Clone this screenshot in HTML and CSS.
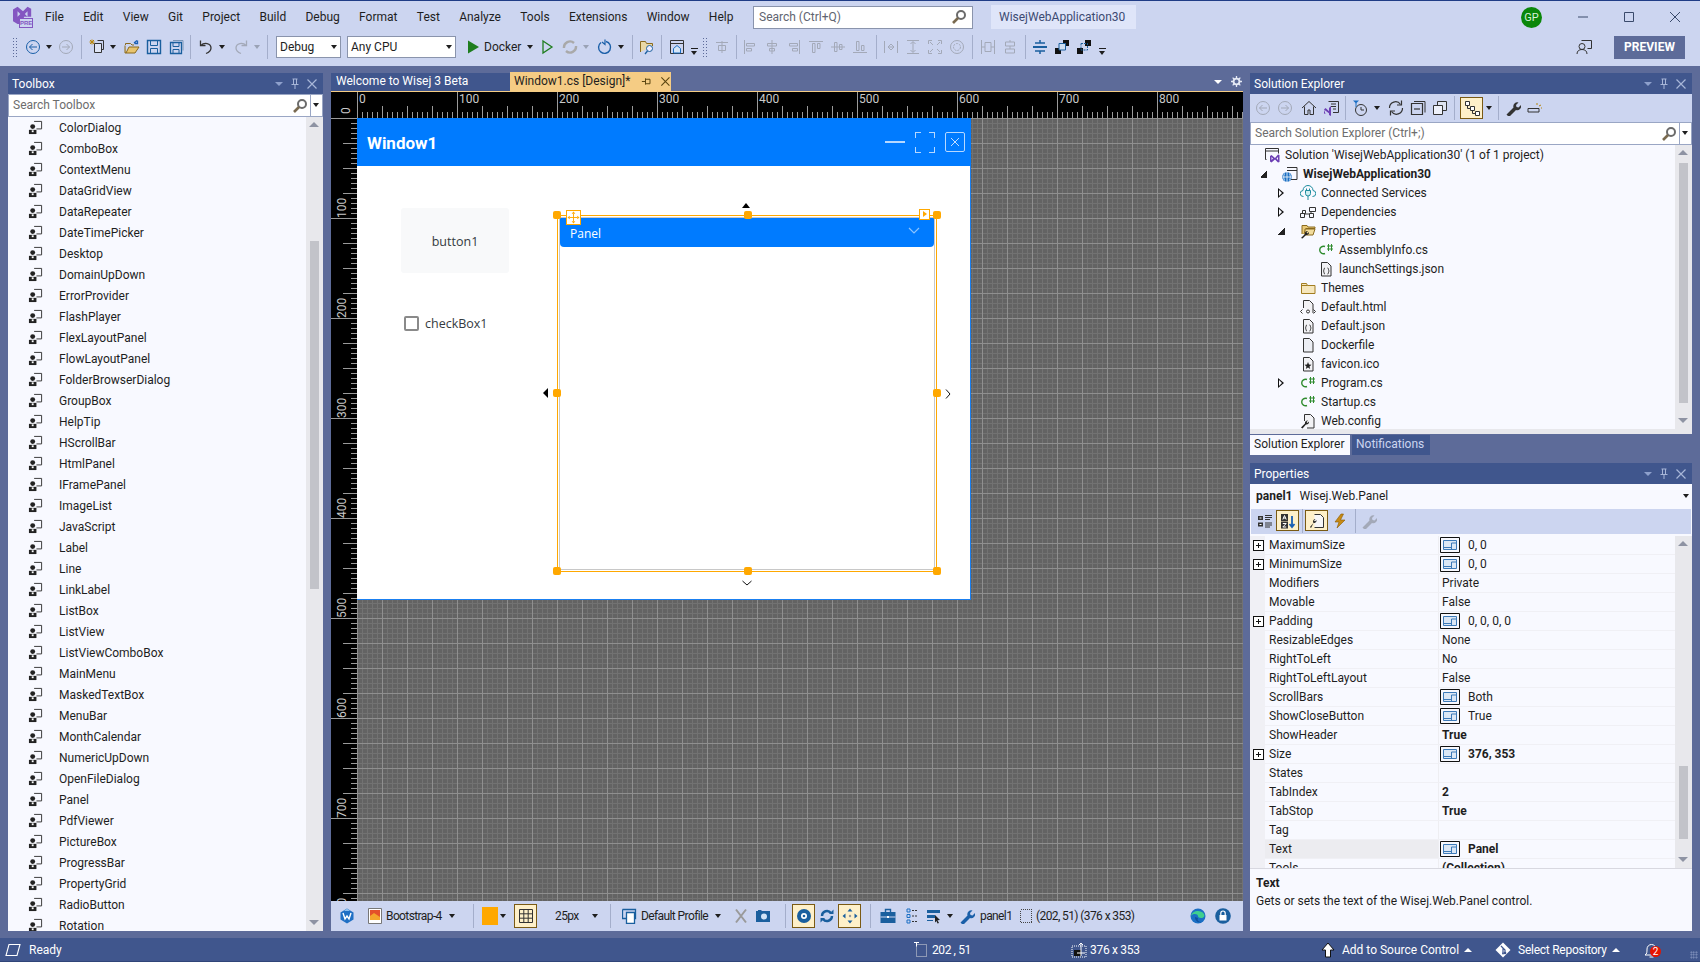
FILE: index.html
```html
<!DOCTYPE html>
<html lang="en">
<head>
<meta charset="UTF-8" />
<title>WisejWebApplication30 - Visual Studio</title>
<link rel="stylesheet" href="styles.css">
</head>
<body>

<svg class="defs" width="0" height="0">
  <symbol id="i-ctl" viewBox="0 0 16 16"><path d="M6.5 1.5h8v8H9" fill="none" stroke="#333"/><circle cx="5" cy="7" r="2.6" fill="#222"/><path d="M1 10.5h8V15H1z" fill="#222"/><path d="M4 11h2v2H4z" fill="#fff"/></symbol>
  <symbol id="i-search" viewBox="0 0 16 16"><circle cx="10" cy="6" r="4" fill="none" stroke="#6b6b6b" stroke-width="2"/><path d="M7 9l-5 5" stroke="#7a6a50" stroke-width="2.6"/></symbol>
  <symbol id="i-back" viewBox="0 0 16 16"><circle cx="8" cy="8" r="6.5" fill="none" stroke="currentColor"/><path d="M12 8H4.5M7.5 5l-3 3 3 3" fill="none" stroke="currentColor"/></symbol>
  <symbol id="i-fwd" viewBox="0 0 16 16"><circle cx="8" cy="8" r="6.5" fill="none" stroke="currentColor"/><path d="M4 8h7.5M8.5 5l3 3-3 3" fill="none" stroke="currentColor"/></symbol>
  <symbol id="i-new" viewBox="0 0 16 16"><path d="M5.5 4.5h7v9h-7z" fill="#dfe5f5" stroke="#333"/><path d="M8.5 1.5h6v9h-2" fill="none" stroke="#333"/><path d="M3 .5v5M.5 3h5M1 1l4 4M5 1L1 5" stroke="#b8860b"/></symbol>
  <symbol id="i-open" viewBox="0 0 16 16"><path d="M1 6.500V14h10l4-6H5l-3 6" fill="#e8c46e" stroke="#8a6a1e"/><path d="M1.500 6V4.500h5L8 6h2" fill="none" stroke="#8a6a1e"/><path d="M10 4l3-2.500M13.500 1.500v3h-3" fill="none" stroke="#1a5fb4" stroke-width="1.300"/></symbol>
  <symbol id="i-save" viewBox="0 0 16 16"><path d="M1.500 1.500h13v13h-13z" fill="none" stroke="#1a5f9e" stroke-width="1.400"/><path d="M4.500 1.500v5h7v-5M4.500 14.500v-5h7v5" fill="none" stroke="#1a5f9e"/></symbol>
  <symbol id="i-saveall" viewBox="0 0 16 16"><path d="M2.500 3.500h11v11h-11z" fill="none" stroke="#1a5f9e" stroke-width="1.300"/><path d="M5 1.500h10v10" fill="none" stroke="#7a97b8"/><path d="M5 3.500v4h6v-4M5 14.500v-4h6v4" fill="none" stroke="#1a5f9e"/></symbol>
  <symbol id="i-undo" viewBox="0 0 16 16"><path d="M2.500 1.500v5h5" fill="none" stroke="currentColor" stroke-width="1.300"/><path d="M3 6.500C6 3 13 4 13 9c0 3-2.500 4.500-5 5.500" fill="none" stroke="currentColor" stroke-width="1.300"/></symbol>
  <symbol id="i-redo" viewBox="0 0 16 16"><path d="M13.500 1.500v5h-5" fill="none" stroke="currentColor" stroke-width="1.300"/><path d="M13 6.500C10 3 3 4 3 9c0 3 2.500 4.500 5 5.500" fill="none" stroke="currentColor" stroke-width="1.300"/></symbol>
  <symbol id="i-play" viewBox="0 0 16 16"><path d="M3 1.500l11 6.500-11 6.500z" fill="#1e7d1e"/></symbol>
  <symbol id="i-playo" viewBox="0 0 16 16"><path d="M4 2l9 6-9 6z" fill="none" stroke="#1e7d1e" stroke-width="1.300"/></symbol>
  <symbol id="i-sync" viewBox="0 0 16 16"><path d="M2 9a6 6 0 0 1 10-5M14 7a6 6 0 0 1-10 5" fill="none" stroke="#a9a9a9" stroke-width="2.400"/></symbol>
  <symbol id="i-refresh" viewBox="0 0 16 16"><path d="M4 3.500a6 6 0 1 0 5-1" fill="none" stroke="currentColor" stroke-width="1.400"/><path d="M8 .5v5l-3-2.500" fill="none" stroke="currentColor" stroke-width="1.200"/></symbol>
  <symbol id="i-findf" viewBox="0 0 16 16"><path d="M1.500 13V2.500h5l1 2h6V7" fill="#e9d8a6" stroke="#8a6a1e"/><circle cx="10.500" cy="9.500" r="3" fill="#eef" stroke="#1a5f9e"/><path d="M8.500 12L6 15" stroke="#1a5f9e" stroke-width="1.300"/></symbol>
  <symbol id="i-homewin" viewBox="0 0 16 16"><path d="M1.500 1.500h13v13h-13zM1.500 4.500h13" fill="none" stroke="#333"/><path d="M4.500 9.500L8 6.500l3.500 3v4.500h-7z" fill="#d6e6f7" stroke="#1a6fc4"/></symbol>
  <symbol id="i-al1" viewBox="0 0 16 16"><path d="M2.500 1v14M4.500 4.500h8v2.500h-8zM4.500 9.500h5v2.500h-5z" fill="none" stroke="currentColor"/></symbol>
  <symbol id="i-al2" viewBox="0 0 16 16"><path d="M8 1v14M3.500 4.500h9v2.500h-9zM5.500 9.500h5v2.500h-5z" fill="none" stroke="currentColor"/></symbol>
  <symbol id="i-al3" viewBox="0 0 16 16"><path d="M13.500 1v14M3.500 4.500h8v2.500h-8zM6.500 9.500h5v2.500h-5z" fill="none" stroke="currentColor"/></symbol>
  <symbol id="i-al4" viewBox="0 0 16 16"><path d="M1 2.500h14M4.500 4.500v9h2.500v-9zM9.500 4.500v5h2.500v-5z" fill="none" stroke="currentColor"/></symbol>
  <symbol id="i-al5" viewBox="0 0 16 16"><path d="M1 8h14M4.500 3.500v9h2.500v-9zM9.500 5.500v5h2.500v-5z" fill="none" stroke="currentColor"/></symbol>
  <symbol id="i-al6" viewBox="0 0 16 16"><path d="M1 13.500h14M4.500 2.500v9h2.500v-9zM9.500 6.500v5h2.500v-5z" fill="none" stroke="currentColor"/></symbol>
  <symbol id="i-al0" viewBox="0 0 16 16"><path d="M8 2v12M2 3.500h12M4.500 6.500h7v5h-7z" fill="none" stroke="currentColor"/></symbol>
  <symbol id="i-sz1" viewBox="0 0 16 16"><path d="M1.500 2v12M14.500 2v12M5 8h6M8 5l3 3-3 3M8 11l-3-3 3-3" fill="none" stroke="currentColor"/></symbol>
  <symbol id="i-sz2" viewBox="0 0 16 16"><path d="M2 1.500h12M2 14.500h12M8 3v10M5.500 5L8 2.500 10.500 5M5.500 11L8 13.500 10.500 11" fill="none" stroke="currentColor"/></symbol>
  <symbol id="i-sz3" viewBox="0 0 16 16"><path d="M1.500 5V1.500H5M11 1.500h3.500V5M14.500 11v3.500H11M5 14.500H1.500V11M3 3l3 3M13 3l-3 3M13 13l-3-3M3 13l3-3" fill="none" stroke="currentColor"/></symbol>
  <symbol id="i-zoom" viewBox="0 0 16 16"><circle cx="8" cy="8" r="6.500" fill="none" stroke="currentColor"/><circle cx="8" cy="8" r="3.500" fill="none" stroke="currentColor" stroke-dasharray="2 1"/></symbol>
  <symbol id="i-sp1" viewBox="0 0 16 16"><path d="M1.500 1v14M14.500 1v14M5 3.500h6v9H5zM1.500 8H5M11 8h3.500" fill="none" stroke="currentColor"/></symbol>
  <symbol id="i-sp2" viewBox="0 0 16 16"><path d="M3.500 3h9v4h-9zM3.500 10h9v4h-9zM8 1v2M8 7v3" fill="none" stroke="currentColor"/></symbol>
  <symbol id="i-eqv" viewBox="0 0 16 16"><path d="M1 8h14" stroke="#1a5f9e" stroke-width="2"/><path d="M3 4h10M3 12h10M8 1v3M8 12v3" stroke="#1a5f9e" stroke-width="1.500"/></symbol>
  <symbol id="i-front" viewBox="0 0 16 16"><path d="M1 9h6v6H1z" fill="#111"/><path d="M9 1h6v6H9z" fill="#111"/><path d="M5 4.500h6.500V11H5z" fill="#cfe0f3" stroke="#1a5f9e"/></symbol>
  <symbol id="i-back2" viewBox="0 0 16 16"><path d="M1 9h6v6H1z" fill="#111"/><path d="M9 1h6v6H9z" fill="#111"/><path d="M5 4.500h6.500V11H5z" fill="none" stroke="#1a5f9e" stroke-dasharray="2 1"/></symbol>
  <symbol id="i-person" viewBox="0 0 16 16"><path d="M5.500 1.500h10v8h-4" fill="none" stroke="#333"/><circle cx="6" cy="7.500" r="3" fill="#ccd5f0" stroke="#333"/><path d="M1 15c0-3 2-4.500 5-4.500s5 1.500 5 4.500" fill="none" stroke="#333"/></symbol>
  <symbol id="i-home" viewBox="0 0 16 16"><path d="M1 8l7-6.500L15 8M3.500 6.500v8h3.500v-4.500h2v4.500h3.500v-8" fill="none" stroke="#333"/></symbol>
  <symbol id="i-vsdoc" viewBox="0 0 16 16"><path d="M5.500 1.500h10v11H10" fill="none" stroke="#333"/><path d="M8 4h5M8 6.500h5M10 9h3" stroke="#333"/><path d="M1 9.500l1.500-1.500L8 13l-.5 1.500zM8 6v10l-2-1V8zM1 9.500v4l1.500.5" fill="#6c3fb4"/></symbol>
  <symbol id="i-clock" viewBox="0 0 16 16"><circle cx="9" cy="10" r="5.500" fill="none" stroke="#333"/><path d="M9 7v3h3" fill="none" stroke="#333"/><path d="M1 .5h6L4 3.500z" fill="#1a6fc4"/><path d="M4 3v4" stroke="#1a6fc4"/></symbol>
  <symbol id="i-sync2" viewBox="0 0 16 16"><path d="M1.500 8a6 6 0 0 1 11-3.500M14.500 8a6 6 0 0 1-11 3.500" fill="none" stroke="#333" stroke-width="1.200"/><path d="M9 5h4.500V.5M7 11H2.500v4.500" fill="none" stroke="#333" stroke-width="1.200"/></symbol>
  <symbol id="i-coll" viewBox="0 0 16 16"><path d="M1.500 3.500h11v11h-11z" fill="none" stroke="#333" stroke-width="1.200"/><path d="M4 1.500h11v11" fill="none" stroke="#333"/><path d="M4 9h6" stroke="#333" stroke-width="1.200"/></symbol>
  <symbol id="i-copies" viewBox="0 0 16 16"><path d="M5.500 1.500h9v9h-9z" fill="#dde3f0" stroke="#333"/><path d="M1.500 5.500h9v9h-9z" fill="#eef1fa" stroke="#333"/></symbol>
  <symbol id="i-tree" viewBox="0 0 16 16"><path d="M1.500 1.500h4v4h-4zM6.500 6.500h4v4h-4zM11.500 11.500h4v4h-4z" fill="#fff" stroke="#333"/><path d="M3.500 5.500V8.500h3M8.500 10.500v3h3" fill="none" stroke="#333"/></symbol>
  <symbol id="i-wrench" viewBox="0 0 16 16"><path d="M1.500 14.500l7-7a4 4 0 0 1 5-5l-2.500 2.500.5 2 2 .5 2.500-2.500a4 4 0 0 1-5 5l-7 7z" fill="currentColor"/></symbol>
  <symbol id="i-prev" viewBox="0 0 16 16"><path d="M1 8.500h11v3.500H1z" fill="none" stroke="#333"/><path d="M12 6l2-1M10 5V3M14 8h1" stroke="#b8860b"/></symbol>
  <symbol id="i-sln" viewBox="0 0 16 16"><path d="M2.500 12.500h-1v-11h13v5" fill="none" stroke="#333"/><path d="M1.500 4h13" stroke="#333"/><path d="M6 9l1.500-1L11 11l3-3.500 1.500.5v7L14 15.500 11 12.500l-3.500 3L6 14.500zM7.500 10v3l1.500-1.500zM14 10l-1.500 1.500L14 13z" fill="#6c3fb4" fill-rule="evenodd"/></symbol>
  <symbol id="i-proj" viewBox="0 0 16 16"><path d="M5 1.500h10v12H9" fill="none" stroke="#333"/><path d="M5 4.500h10" stroke="#333"/><circle cx="5" cy="11" r="4.800" fill="#1a6fc4"/><path d="M.5 11h9M5 6v10M2.500 7.500c-1 2-1 5 0 7M7.500 7.500c1 2 1 5 0 7" fill="none" stroke="#fff" stroke-width=".8"/></symbol>
  <symbol id="i-conn" viewBox="0 0 16 16"><path d="M3.500 11.500A3 3 0 0 1 3 5.500a5 5 0 0 1 10 0 3 3 0 0 1-.5 6" fill="none" stroke="#1c8c9e"/><path d="M5.500 5.500v3a2.500 2.500 0 0 0 5 0v-3zM6.500 3.500v2M9.500 3.500v2M8 11v4" fill="#cdeef2" stroke="#1c8c9e"/></symbol>
  <symbol id="i-dep" viewBox="0 0 16 16"><path d="M2.500 6.500h3v3h-3zM.5 9.500h4v4h-4zM9.500 3.500h6v4h-6zM9.500 9.500h4v4h-4z" fill="none" stroke="#333"/><path d="M5 10h4.500M11 7.500v2" stroke="#333"/></symbol>
  <symbol id="i-propf" viewBox="0 0 16 16"><path d="M2 11V2.500h5l1 1.500h7v1.500H6L4 11" fill="#e9c976" stroke="#8a6a1e"/><path d="M5 6h10l-2 6H5z" fill="#f2dc9c" stroke="#8a6a1e"/><path d="M1 15l4-4a2.500 2.500 0 0 1 3-3L6.500 9.500l1 1L9 9a2.500 2.500 0 0 1-3 3L2.500 15.500z" fill="#222"/></symbol>
  <symbol id="i-cs" viewBox="0 0 16 16"><path d="M7 4.500A3.800 3.800 0 1 0 7 11.500" fill="none" stroke="#2e8b2e" stroke-width="1.400"/><path d="M10.500 2v7M13.500 2v7M9 4h6M9 7h6" stroke="#2e8b2e"/></symbol>
  <symbol id="i-json" viewBox="0 0 16 16"><path d="M3.500 1.500h6l3.500 3.500v10h-9.500z" fill="#f2f2f5" stroke="#333"/><path d="M7 7c-1.500 0-.5 2.500-1.800 3 1.300.5.300 3 1.800 3M9.500 7c1.500 0 .5 2.500 1.800 3-1.300.5-.3 3-1.800 3" fill="none" stroke="#333"/></symbol>
  <symbol id="i-folder" viewBox="0 0 16 16"><path d="M1.500 3.500h5l1 2h7.500v8h-13.500z" fill="#f6e7bd" stroke="#a27d20"/><path d="M1.500 5.500h6" stroke="#a27d20"/></symbol>
  <symbol id="i-html" viewBox="0 0 16 16"><path d="M3.500 9V1.500h6l3.500 3.500v9" fill="#f2f2f5" stroke="#333"/><path d="M2.500 10.500l-2 2 2 2M13.500 10.500l2 2-2 2" fill="none" stroke="#333"/><circle cx="8" cy="12.500" r="1.500" fill="none" stroke="#333"/></symbol>
  <symbol id="i-file" viewBox="0 0 16 16"><path d="M3.500 1.500h6l3.500 3.500v10h-9.500z" fill="#eceef4" stroke="#333"/></symbol>
  <symbol id="i-ico" viewBox="0 0 16 16"><path d="M3.500 1.500h6l3.500 3.500v10h-9.500z" fill="#f2f2f5" stroke="#333"/><path d="M8 6l1 2.500 2.500.2-2 1.700.7 2.600L8 11.500 5.800 13l.7-2.600-2-1.700 2.500-.2z" fill="#222"/></symbol>
  <symbol id="i-config" viewBox="0 0 16 16"><path d="M4.500 8V1.500h6l3.500 3.500v10H7" fill="#f2f2f5" stroke="#333"/><path d="M1 14.500L5 10.500a2.500 2.500 0 0 1 3-3L6.500 9l1 1L9 8.500a2.500 2.500 0 0 1-3 3L2.500 15.500z" fill="#222"/></symbol>
  <symbol id="i-cat" viewBox="0 0 16 16"><path d="M1 3h5v4H1zM1 9.500h5v4H1z" fill="#333"/><path d="M2.500 4.500h2v1h-2zM2.500 11h2v1h-2z" fill="#fff"/><path d="M8 2.500h7M8 4.500h7M8 6.500h5M8 10h7M8 12h7M8 14h5" stroke="#333"/></symbol>
  <symbol id="i-az" viewBox="0 0 16 16"><path d="M1 1h7v7H1zM1 8.500h7v7H1z" fill="#333"/><path d="M2.800 6.500L4.500 2.500l1.700 4M3.300 5h2.400M2.800 10.500h3.400l-3.400 3.500h3.400" fill="none" stroke="#fff"/><path d="M12 3v11M9.500 11l2.500 3 2.500-3" fill="none" stroke="#1a5fb4" stroke-width="1.800"/></symbol>
  <symbol id="i-proppg" viewBox="0 0 16 16"><path d="M5.500 1.500h6l3 3v10h-9" fill="#f6f6f8" stroke="#333"/><path d="M1 14L4.500 10a2.500 2.500 0 0 1 2-4L5 7.500l1 1L7.500 7a2.500 2.500 0 0 1-3 3L2 15z" fill="#222"/></symbol>
  <symbol id="i-bolt" viewBox="0 0 16 16"><path d="M9 1L3 9h4l-2 6 8-8H8.500l3-6z" fill="#c88a14" stroke="#8a5c00" stroke-width=".6"/></symbol>
  <symbol id="i-val" viewBox="0 0 20 16"><path d="M.5.500h19v15H.5z" fill="#f8f9fe" stroke="#111"/><path d="M3.500 3.500h13v9h-13z" fill="#dbe7f5" stroke="#3d7ab8"/><path d="M3.500 10.500h8V12.500M11.500 6v6.500M16 6h-4.500" fill="none" stroke="#3d7ab8"/></symbol>
  <symbol id="i-wlogo" viewBox="0 0 16 16"><path d="M8 .5L14.500 4.500V11.500L8 15.500 1.500 11.500V4.500z" fill="#1f6fc4"/><path d="M4 5l2 6 2-3 2 3 2-6" fill="none" stroke="#fff" stroke-width="1.400"/><path d="M8 .5L11 3H5z" fill="#8ec1f0"/></symbol>
  <symbol id="i-theme" viewBox="0 0 16 16"><path d="M1.500 .5h13v15h-13z" fill="#fff" stroke="#777"/><path d="M3 2h10v10H3z" fill="#e4502a"/><path d="M3 8l4-3 6 4v3H3z" fill="#f4a52c"/></symbol>
  <symbol id="i-grid" viewBox="0 0 16 16"><path d="M1.500 1.500h13v13h-13zM5.800 1.500v13M10.200 1.500v13M1.500 5.800h13M1.500 10.200h13" fill="none" stroke="#333"/></symbol>
  <symbol id="i-profile" viewBox="0 0 16 16"><path d="M.5 1.500h13v9H10" fill="none" stroke="#1a5f9e" stroke-width="1.300"/><path d="M4.500 4.500h8v11h-8z" fill="#fff" stroke="#1a5f9e" stroke-width="1.300"/><path d="M.5 1.500v9H4.500" fill="none" stroke="#1a5f9e" stroke-width="1.300"/></symbol>
  <symbol id="i-x" viewBox="0 0 16 16"><path d="M3 1.500l10 13M13 1.500L3 14.500" stroke="#9a9a9a" stroke-width="2"/></symbol>
  <symbol id="i-cam" viewBox="0 0 16 16"><path d="M1 3h2V2h3l1 1h8v11H1z" fill="#1a5f9e"/><circle cx="9" cy="8.500" r="3" fill="#cfe3f7"/></symbol>
  <symbol id="i-eye" viewBox="0 0 16 16"><circle cx="8" cy="8" r="7" fill="#1a5f9e"/><circle cx="8" cy="8" r="3" fill="#fff"/><circle cx="8" cy="8" r="1.300" fill="#1a5f9e"/></symbol>
  <symbol id="i-loop" viewBox="0 0 16 16"><path d="M3 8a5 5 0 0 1 9-3M13 8a5 5 0 0 1-9 3" fill="none" stroke="#1a5f9e" stroke-width="2.400"/><path d="M10 6h4.500V1.500zM6 10H1.500v4.500z" fill="#1a5f9e"/></symbol>
  <symbol id="i-arrows" viewBox="0 0 16 16"><path d="M8 .5l2.500 3h-5zM8 15.500l-2.500-3h5zM.5 8l3-2.500v5zM15.500 8l-3 2.500v-5z" fill="#1a5f9e"/><circle cx="8" cy="8" r="1.200" fill="#999"/></symbol>
  <symbol id="i-case" viewBox="0 0 16 16"><path d="M5.500 4V1.500h5V4" fill="none" stroke="#1a5f9e" stroke-width="1.400"/><path d="M.5 4h15v11H.5z" fill="#1a5f9e"/><path d="M.5 9h15" stroke="#ccd5f0"/><path d="M7 8h2v2H7z" fill="#fff"/></symbol>
  <symbol id="i-list" viewBox="0 0 16 16"><path d="M3 1h3v3H3zM3 6.500h3v3H3zM3 12h3v3H3z" fill="none" stroke="#1a6fc4"/><path d="M8 2.500h6M8 8h6M8 13.500h6" stroke="#333" stroke-dasharray="2 1"/></symbol>
  <symbol id="i-tabs" viewBox="0 0 16 16"><path d="M1 2h13v3H1zM1 7h8v3H1z" fill="#1a5f9e"/><path d="M1 12h6v1H1z" fill="#1a5f9e"/><path d="M9 7l5 5-2.500.3L13 15l-1.500.5-1-2.500L9 14.500z" fill="#222"/></symbol>
  <symbol id="i-dots" viewBox="0 0 16 16"><path d="M2.500 1.500h11v13h-11z" fill="none" stroke="#444" stroke-dasharray="1 1" shape-rendering="crispEdges"/></symbol>
  <symbol id="i-edge" viewBox="0 0 16 16"><circle cx="8" cy="8" r="7.500" fill="#1a6fc4"/><path d="M1 8c1-5 9-7 13-2 1 2 0 4-3 4-2 0-3-1-3-2 0-2-5-3-7 0z" fill="#3fcf8e"/><path d="M5 9c0 4 3 6 7 5-4 0-5-2-4-4z" fill="#0d4f9e"/></symbol>
  <symbol id="i-lock" viewBox="0 0 16 16"><circle cx="8" cy="8" r="7.800" fill="#1a5f9e"/><path d="M5.800 7V5.200a2.200 2.200 0 0 1 4.400 0V7" fill="none" stroke="#fff" stroke-width="1.200"/><path d="M4.500 7h7v5.500h-7z" fill="#fff"/></symbol>
  <symbol id="i-ready" viewBox="0 0 16 16"><path d="M4 2.500h11l-3 11H1z" fill="none" stroke="#fff" stroke-width="1.100"/></symbol>
  <symbol id="i-pos" viewBox="0 0 16 16"><path d="M3.500 2.500h10v12h-10z" fill="none" stroke="#ddd" stroke-dasharray="1 1"/><path d="M1 .5h5M3.500.5v4" stroke="#fff"/></symbol>
  <symbol id="i-size" viewBox="0 0 16 16"><path d="M1 4h14v11H1z" fill="none" stroke="#fff" stroke-dasharray="1 1"/><path d="M3 8h7v6H3z" fill="#111"/><path d="M10 1v13M6 11h8M8 3l2-2 2 2" fill="none" stroke="#fff"/></symbol>
  <symbol id="i-upload" viewBox="0 0 16 16"><path d="M8 1L14 8H10.500V15H5.500V8H2z" fill="#fff" stroke="#111"/></symbol>
  <symbol id="i-git" viewBox="0 0 16 16"><path d="M8 .5L15.500 8 8 15.500.5 8z" fill="#fff"/><path d="M6 4l4 4v3.500M8 6v5" fill="none" stroke="#40568d" stroke-width="1.200"/><circle cx="10" cy="11" r="1.300" fill="#40568d"/><circle cx="8" cy="11.500" r="1" fill="#40568d"/></symbol>
  <symbol id="i-bell" viewBox="0 0 16 16"><path d="M2 13c2-1 2-3 2-6a4.500 4.500 0 0 1 9 0c0 3 0 5 2 6zM6.500 15h4" fill="none" stroke="#fff"/></symbol>
  <symbol id="i-pin" viewBox="0 0 12 12"><path d="M3.500 1h5M4.500 1v5M7.500 1v5M2.500 6.500h7M6 6.500V11" fill="none" stroke="currentColor"/></symbol>
  <symbol id="i-close" viewBox="0 0 12 12"><path d="M1.500 1.500l9 9M10.500 1.500l-9 9" fill="none" stroke="currentColor" stroke-width="1.200"/></symbol>
  <symbol id="i-tabpin" viewBox="0 0 12 12"><path d="M1 6h4M5 2.500v7M5 3.500h5v5H5" fill="none" stroke="#5a4510" stroke-width="1.100"/></symbol>
  <symbol id="i-gear" viewBox="0 0 12 12"><circle cx="6" cy="6" r="3.200" fill="none" stroke="currentColor" stroke-width="2"/><path d="M6 0v2.500M6 9.500V12M0 6h2.500M9.500 6H12M1.800 1.800l1.700 1.700M8.500 8.500l1.700 1.700M1.800 10.200l1.700-1.700M8.500 3.500l1.700-1.700" stroke="currentColor" stroke-width="1.400"/></symbol>
  <symbol id="i-move" viewBox="0 0 14 14"><path d="M7 .5L9 3H5zM7 13.500L5 11h4zM.5 7L3 5v4zM13.500 7L11 9V5z" fill="#ffa800"/><path d="M7 3v8M3 7h8" stroke="#ffa800"/></symbol>
</svg>

<header class="app-head">
  <div class="menu-row">
    <div class="vs-logo">
      <svg class="vs-mark" viewBox="0 0 22 22"><path d="M0 5L5 2l6 5 5-5 4 2v9h-8v8H5l-5-3z" fill="#8457c1"/><path d="M5 7v6l3-3zM16 7l-3 3 3 3z" fill="#ccd5f0"/></svg>
      <span class="pre">PRE</span>
    </div>
    <nav class="menu">
      <span>File</span><span>Edit</span><span>View</span><span>Git</span><span>Project</span><span>Build</span><span>Debug</span><span>Format</span><span>Test</span><span>Analyze</span><span>Tools</span><span>Extensions</span><span>Window</span><span>Help</span>
    </nav>
    <div class="quick-search"><span>Search (Ctrl+Q)</span><svg class="ic"><use href="#i-search"/></svg></div>
    <div class="sol-name">WisejWebApplication30</div>
    <div class="avatar">GP</div>
    <div class="win-btn first"><svg viewBox="0 0 12 12"><path d="M1 6h10" stroke="#3a4a6b"/></svg></div>
    <div class="win-btn"><svg viewBox="0 0 12 12"><path d="M1.500 1.500h9v9h-9z" fill="none" stroke="#3a4a6b"/></svg></div>
    <div class="win-btn"><svg viewBox="0 0 12 12"><path d="M1 1l10 10M11 1L1 11" stroke="#3a4a6b"/></svg></div>
  </div>
  <div class="tool-row">
    <i class="grip ml12"></i>
    <span class="tb blue ml4"><svg class="ic"><use href="#i-back"/></svg></span><i class="car"></i>
    <span class="tb off"><svg class="ic"><use href="#i-fwd"/></svg></span>
    <i class="sep ml4"></i>
    <span class="tb ml4"><svg class="ic"><use href="#i-new"/></svg></span><i class="car"></i>
    <span class="tb ml2"><svg class="ic"><use href="#i-open"/></svg></span>
    <span class="tb"><svg class="ic"><use href="#i-save"/></svg></span>
    <span class="tb"><svg class="ic"><use href="#i-saveall"/></svg></span>
    <i class="sep ml3"></i>
    <span class="tb dark ml4"><svg class="ic"><use href="#i-undo"/></svg></span><i class="car"></i>
    <span class="tb off ml2"><svg class="ic"><use href="#i-redo"/></svg></span><i class="car off"></i>
    <i class="sep ml4"></i>
    <div class="combo combo-debug ml8"><span>Debug</span><i class="car"></i></div>
    <div class="combo combo-cpu ml6"><span>Any CPU</span><i class="car"></i></div>
    <span class="tb ml6"><svg class="ic"><use href="#i-play"/></svg></span>
    <span class="tool-text">Docker</span><i class="car ml4"></i>
    <span class="tb"><svg class="ic"><use href="#i-playo"/></svg></span>
    <span class="tb ml1"><svg class="ic"><use href="#i-sync"/></svg></span><i class="car off"></i>
    <span class="tb blue ml2"><svg class="ic"><use href="#i-refresh"/></svg></span><i class="car"></i>
    <i class="sep ml5"></i>
    <span class="tb ml3"><svg class="ic"><use href="#i-findf"/></svg></span>
    <i class="sep ml3"></i>
    <span class="tb ml4"><svg class="ic"><use href="#i-homewin"/></svg></span><i class="more ml1"></i>
    <i class="grip ml2"></i>
    <span class="tb off ml3"><svg class="ic"><use href="#i-al0"/></svg></span>
    <i class="sep ml3"></i>
    <span class="tb off ml2"><svg class="ic"><use href="#i-al1"/></svg></span>
    <span class="tb off"><svg class="ic"><use href="#i-al2"/></svg></span>
    <span class="tb off"><svg class="ic"><use href="#i-al3"/></svg></span>
    <span class="tb off"><svg class="ic"><use href="#i-al4"/></svg></span>
    <span class="tb off"><svg class="ic"><use href="#i-al5"/></svg></span>
    <span class="tb off"><svg class="ic"><use href="#i-al6"/></svg></span>
    <i class="sep ml5"></i>
    <span class="tb off ml3"><svg class="ic"><use href="#i-sz1"/></svg></span>
    <span class="tb off"><svg class="ic"><use href="#i-sz2"/></svg></span>
    <span class="tb off"><svg class="ic"><use href="#i-sz3"/></svg></span>
    <span class="tb off"><svg class="ic"><use href="#i-zoom"/></svg></span>
    <i class="sep ml4"></i>
    <span class="tb off ml4"><svg class="ic"><use href="#i-sp1"/></svg></span>
    <span class="tb off"><svg class="ic"><use href="#i-sp2"/></svg></span>
    <i class="sep ml4"></i>
    <span class="tb ml3"><svg class="ic"><use href="#i-eqv"/></svg></span>
    <span class="tb"><svg class="ic"><use href="#i-front"/></svg></span>
    <span class="tb"><svg class="ic"><use href="#i-back2"/></svg></span>
    <i class="more ml2"></i>
    <span class="tb push"><svg class="ic"><use href="#i-person"/></svg></span>
    <div class="preview">PREVIEW</div>
  </div>
</header>

<main class="workspace">

  <section class="panel toolbox">
    <div class="panel-head"><span>Toolbox</span><i class="head-car"></i><svg class="pin"><use href="#i-pin"/></svg><svg class="pin"><use href="#i-close"/></svg></div>
    <div class="search-box"><span>Search Toolbox</span><svg class="ic"><use href="#i-search"/></svg><i class="search-drop"></i></div>
    <div class="scroll-area">
      <ul class="tool-list">
        <li><svg class="ic"><use href="#i-ctl"/></svg>ColorDialog</li>
        <li><svg class="ic"><use href="#i-ctl"/></svg>ComboBox</li>
        <li><svg class="ic"><use href="#i-ctl"/></svg>ContextMenu</li>
        <li><svg class="ic"><use href="#i-ctl"/></svg>DataGridView</li>
        <li><svg class="ic"><use href="#i-ctl"/></svg>DataRepeater</li>
        <li><svg class="ic"><use href="#i-ctl"/></svg>DateTimePicker</li>
        <li><svg class="ic"><use href="#i-ctl"/></svg>Desktop</li>
        <li><svg class="ic"><use href="#i-ctl"/></svg>DomainUpDown</li>
        <li><svg class="ic"><use href="#i-ctl"/></svg>ErrorProvider</li>
        <li><svg class="ic"><use href="#i-ctl"/></svg>FlashPlayer</li>
        <li><svg class="ic"><use href="#i-ctl"/></svg>FlexLayoutPanel</li>
        <li><svg class="ic"><use href="#i-ctl"/></svg>FlowLayoutPanel</li>
        <li><svg class="ic"><use href="#i-ctl"/></svg>FolderBrowserDialog</li>
        <li><svg class="ic"><use href="#i-ctl"/></svg>GroupBox</li>
        <li><svg class="ic"><use href="#i-ctl"/></svg>HelpTip</li>
        <li><svg class="ic"><use href="#i-ctl"/></svg>HScrollBar</li>
        <li><svg class="ic"><use href="#i-ctl"/></svg>HtmlPanel</li>
        <li><svg class="ic"><use href="#i-ctl"/></svg>IFramePanel</li>
        <li><svg class="ic"><use href="#i-ctl"/></svg>ImageList</li>
        <li><svg class="ic"><use href="#i-ctl"/></svg>JavaScript</li>
        <li><svg class="ic"><use href="#i-ctl"/></svg>Label</li>
        <li><svg class="ic"><use href="#i-ctl"/></svg>Line</li>
        <li><svg class="ic"><use href="#i-ctl"/></svg>LinkLabel</li>
        <li><svg class="ic"><use href="#i-ctl"/></svg>ListBox</li>
        <li><svg class="ic"><use href="#i-ctl"/></svg>ListView</li>
        <li><svg class="ic"><use href="#i-ctl"/></svg>ListViewComboBox</li>
        <li><svg class="ic"><use href="#i-ctl"/></svg>MainMenu</li>
        <li><svg class="ic"><use href="#i-ctl"/></svg>MaskedTextBox</li>
        <li><svg class="ic"><use href="#i-ctl"/></svg>MenuBar</li>
        <li><svg class="ic"><use href="#i-ctl"/></svg>MonthCalendar</li>
        <li><svg class="ic"><use href="#i-ctl"/></svg>NumericUpDown</li>
        <li><svg class="ic"><use href="#i-ctl"/></svg>OpenFileDialog</li>
        <li><svg class="ic"><use href="#i-ctl"/></svg>Panel</li>
        <li><svg class="ic"><use href="#i-ctl"/></svg>PdfViewer</li>
        <li><svg class="ic"><use href="#i-ctl"/></svg>PictureBox</li>
        <li><svg class="ic"><use href="#i-ctl"/></svg>ProgressBar</li>
        <li><svg class="ic"><use href="#i-ctl"/></svg>PropertyGrid</li>
        <li><svg class="ic"><use href="#i-ctl"/></svg>RadioButton</li>
        <li><svg class="ic"><use href="#i-ctl"/></svg>Rotation</li>
      </ul>
      <div class="vscroll toolbox-scroll"><i class="up"></i><b></b><i class="down"></i></div>
    </div>
  </section>

  <section class="center">
    <div class="doc-tabs">
      <div class="doc-tab">Welcome to Wisej 3 Beta</div>
      <div class="doc-tab active"><span>Window1.cs [Design]*</span><svg class="tab-pin"><use href="#i-tabpin"/></svg><svg class="tab-x"><use href="#i-close"/></svg></div>
      <i class="head-car push"></i>
      <svg class="tab-gear"><use href="#i-gear"/></svg>
    </div>
    <div class="designer">
      <div class="ruler-top">
        <div class="ruler-corner">0</div>
        <div class="ruler-marks">
          <span>0</span><span>100</span><span>200</span><span>300</span><span>400</span><span>500</span><span>600</span><span>700</span><span>800</span><span></span>
        </div>
      </div>
      <div class="design-body">
        <div class="ruler-left">
          <span>100</span><span>200</span><span>300</span><span>400</span><span>500</span><span>600</span><span>700</span><span>800</span>
        </div>
        <div class="surface">
          <div class="form">
            <div class="form-title">
              <span>Window1</span>
              <i class="form-min"></i>
              <i class="form-max"></i>
              <i class="form-close"><svg viewBox="0 0 12 12"><path d="M2 2l8 8M10 2l-8 8" stroke="#c4deff"/></svg></i>
            </div>
            <div class="btn1">button1</div>
            <div class="chk1"><i></i><span>checkBox1</span></div>
            <div class="selection">
              <div class="wj-panel"><div class="wj-panel-head"><span>Panel</span><svg viewBox="0 0 12 8"><path d="M1 1l5 5 5-5" fill="none" stroke="#8cc4ff" stroke-width="1.200"/></svg></div></div>
              <i class="h tl"></i><i class="h tc"></i><i class="h tr"></i>
              <i class="h ml"></i><i class="h mr"></i>
              <i class="h bl"></i><i class="h bc"></i><i class="h br"></i>
              <span class="move-box"><svg><use href="#i-move"/></svg></span>
              <span class="tag-box"></span>
              <i class="anc-up"></i><i class="anc-left"></i>
              <svg class="anc-right" viewBox="0 0 6 10"><path d="M1 .5l4 4.500-4 4.500" fill="none" stroke="#111"/></svg>
              <svg class="anc-down" viewBox="0 0 10 6"><path d="M.5 1L5 5l4.500-4" fill="none" stroke="#111"/></svg>
            </div>
          </div>
        </div>
      </div>
    </div>
    <div class="design-tools">
      <span class="tb ml5"><svg class="ic"><use href="#i-wlogo"/></svg></span>
      <span class="tb ml6"><svg class="ic"><use href="#i-theme"/></svg></span>
      <span class="dt-text w54">Bootstrap-4</span><i class="car ml7"></i>
      <i class="sep ml15"></i>
      <i class="swatch ml8"></i><i class="car"></i>
      <span class="tog w23 ml5"><svg class="ic"><use href="#i-grid"/></svg></span>
      <span class="dt-text w23 ml18">25px</span><i class="car ml12"></i>
      <i class="sep ml9"></i>
      <span class="tb ml8"><svg class="ic"><use href="#i-profile"/></svg></span>
      <span class="dt-text w65">Default Profile</span><i class="car ml7"></i>
      <span class="tb ml6"><svg class="ic"><use href="#i-x"/></svg></span>
      <span class="tb"><svg class="ic"><use href="#i-cam"/></svg></span>
      <i class="sep ml11"></i>
      <span class="tog w23 ml6"><svg class="ic"><use href="#i-eye"/></svg></span>
      <span class="tb ml1"><svg class="ic"><use href="#i-loop"/></svg></span>
      <span class="tog w23"><svg class="ic"><use href="#i-arrows"/></svg></span>
      <i class="sep ml9"></i>
      <span class="tb ml6"><svg class="ic"><use href="#i-case"/></svg></span>
      <span class="tb ml2"><svg class="ic"><use href="#i-list"/></svg></span>
      <span class="tb"><svg class="ic"><use href="#i-tabs"/></svg></span><i class="car"></i>
      <span class="tb blue"><svg class="ic"><use href="#i-wrench"/></svg></span>
      <span class="dt-text w33 ml2">panel1</span>
      <span class="dots ml7"><svg class="ic"><use href="#i-dots"/></svg></span>
      <span class="dt-text ml4">(202, 51) (376 x 353)</span>
      <span class="tb push"><svg class="ic"><use href="#i-edge"/></svg></span>
      <span class="tb ml3 tail"><svg class="ic"><use href="#i-lock"/></svg></span>
    </div>
  </section>

  <aside class="right-col">
    <section class="panel solution">
      <div class="panel-head"><span>Solution Explorer</span><i class="head-car"></i><svg class="pin"><use href="#i-pin"/></svg><svg class="pin"><use href="#i-close"/></svg></div>
      <div class="se-tools">
        <span class="tb off ml2"><svg class="ic"><use href="#i-back"/></svg></span>
        <span class="tb off"><svg class="ic"><use href="#i-fwd"/></svg></span>
        <span class="tb ml2"><svg class="ic"><use href="#i-home"/></svg></span>
        <span class="tb"><svg class="ic"><use href="#i-vsdoc"/></svg></span>
        <i class="sep ml3"></i>
        <span class="tb ml3"><svg class="ic"><use href="#i-clock"/></svg></span><i class="car ml1"></i>
        <span class="tb ml2"><svg class="ic"><use href="#i-sync2"/></svg></span>
        <span class="tb"><svg class="ic"><use href="#i-coll"/></svg></span>
        <span class="tb"><svg class="ic"><use href="#i-copies"/></svg></span>
        <i class="sep ml3"></i>
        <span class="tog w23 ml5"><svg class="ic"><use href="#i-tree"/></svg></span><i class="car ml1"></i>
        <i class="sep ml3"></i>
        <span class="tb ml3 dark"><svg class="ic"><use href="#i-wrench"/></svg></span>
        <span class="tb"><svg class="ic"><use href="#i-prev"/></svg></span>
      </div>
      <div class="search-box"><span>Search Solution Explorer (Ctrl+;)</span><svg class="ic"><use href="#i-search"/></svg><i class="search-drop"></i></div>
      <div class="scroll-area tree-area">
        <ul class="tree">
          <li class="lv0"><svg class="ic"><use href="#i-sln"/></svg>Solution 'WisejWebApplication30' (1 of 1 project)</li>
          <li class="lv1 strong"><i class="exp open"></i><svg class="ic"><use href="#i-proj"/></svg>WisejWebApplication30</li>
          <li class="lv2"><i class="exp"></i><svg class="ic"><use href="#i-conn"/></svg>Connected Services</li>
          <li class="lv2"><i class="exp"></i><svg class="ic"><use href="#i-dep"/></svg>Dependencies</li>
          <li class="lv2"><i class="exp open"></i><svg class="ic"><use href="#i-propf"/></svg>Properties</li>
          <li class="lv3"><i class="exp none"></i><svg class="ic"><use href="#i-cs"/></svg>AssemblyInfo.cs</li>
          <li class="lv3"><i class="exp none"></i><svg class="ic"><use href="#i-json"/></svg>launchSettings.json</li>
          <li class="lv2"><i class="exp none"></i><svg class="ic"><use href="#i-folder"/></svg>Themes</li>
          <li class="lv2"><i class="exp none"></i><svg class="ic"><use href="#i-html"/></svg>Default.html</li>
          <li class="lv2"><i class="exp none"></i><svg class="ic"><use href="#i-json"/></svg>Default.json</li>
          <li class="lv2"><i class="exp none"></i><svg class="ic"><use href="#i-file"/></svg>Dockerfile</li>
          <li class="lv2"><i class="exp none"></i><svg class="ic"><use href="#i-ico"/></svg>favicon.ico</li>
          <li class="lv2"><i class="exp"></i><svg class="ic"><use href="#i-cs"/></svg>Program.cs</li>
          <li class="lv2"><i class="exp none"></i><svg class="ic"><use href="#i-cs"/></svg>Startup.cs</li>
          <li class="lv2"><i class="exp none"></i><svg class="ic"><use href="#i-config"/></svg>Web.config</li>
        </ul>
        <div class="vscroll tree-scroll"><i class="up"></i><b></b><i class="down"></i></div>
      </div>
      <div class="hscroll-strip"></div>
      <div class="tool-tabs">
        <span class="tool-tab active">Solution Explorer</span>
        <span class="tool-tab">Notifications</span>
      </div>
    </section>

    <section class="panel props">
      <div class="panel-head"><span>Properties</span><i class="head-car"></i><svg class="pin"><use href="#i-pin"/></svg><svg class="pin"><use href="#i-close"/></svg></div>
      <div class="obj-select"><b>panel1</b><span>Wisej.Web.Panel</span><i class="car"></i></div>
      <div class="prop-tools">
        <span class="tb ml3"><svg class="ic"><use href="#i-cat"/></svg></span>
        <span class="tog w23"><svg class="ic"><use href="#i-az"/></svg></span>
        <i class="sep ml3"></i>
        <span class="tog w23 ml2"><svg class="ic"><use href="#i-proppg"/></svg></span>
        <span class="tb ml1"><svg class="ic"><use href="#i-bolt"/></svg></span>
        <i class="sep ml4"></i>
        <span class="tb ml2 off"><svg class="ic"><use href="#i-wrench"/></svg></span>
      </div>
      <div class="scroll-area prop-area">
        <div class="prop-grid">
          <div class="pr"><i class="plus"></i><span class="pn">MaximumSize</span><span class="pv"><svg class="val"><use href="#i-val"/></svg>0, 0</span></div>
          <div class="pr"><i class="plus"></i><span class="pn">MinimumSize</span><span class="pv"><svg class="val"><use href="#i-val"/></svg>0, 0</span></div>
          <div class="pr"><i></i><span class="pn">Modifiers</span><span class="pv">Private</span></div>
          <div class="pr"><i></i><span class="pn">Movable</span><span class="pv">False</span></div>
          <div class="pr"><i class="plus"></i><span class="pn">Padding</span><span class="pv"><svg class="val"><use href="#i-val"/></svg>0, 0, 0, 0</span></div>
          <div class="pr"><i></i><span class="pn">ResizableEdges</span><span class="pv">None</span></div>
          <div class="pr"><i></i><span class="pn">RightToLeft</span><span class="pv">No</span></div>
          <div class="pr"><i></i><span class="pn">RightToLeftLayout</span><span class="pv">False</span></div>
          <div class="pr"><i></i><span class="pn">ScrollBars</span><span class="pv"><svg class="val"><use href="#i-val"/></svg>Both</span></div>
          <div class="pr"><i></i><span class="pn">ShowCloseButton</span><span class="pv"><svg class="val"><use href="#i-val"/></svg>True</span></div>
          <div class="pr"><i></i><span class="pn">ShowHeader</span><span class="pv bold">True</span></div>
          <div class="pr"><i class="plus"></i><span class="pn">Size</span><span class="pv bold"><svg class="val"><use href="#i-val"/></svg>376, 353</span></div>
          <div class="pr"><i></i><span class="pn">States</span><span class="pv"></span></div>
          <div class="pr"><i></i><span class="pn">TabIndex</span><span class="pv bold">2</span></div>
          <div class="pr"><i></i><span class="pn">TabStop</span><span class="pv bold">True</span></div>
          <div class="pr"><i></i><span class="pn">Tag</span><span class="pv"></span></div>
          <div class="pr sel"><i></i><span class="pn">Text</span><span class="pv bold"><svg class="val"><use href="#i-val"/></svg>Panel</span></div>
          <div class="pr"><i></i><span class="pn">Tools</span><span class="pv bold">(Collection)</span></div>
        </div>
        <div class="vscroll prop-scroll"><i class="up"></i><b></b><i class="down"></i></div>
      </div>
      <div class="prop-desc">
        <b>Text</b>
        <p>Gets or sets the text of the Wisej.Web.Panel control.</p>
      </div>
    </section>
  </aside>
</main>

<footer class="status">
  <div class="st-left"><svg class="ic"><use href="#i-ready"/></svg><span>Ready</span></div>
  <div class="st-pos"><svg class="ic"><use href="#i-pos"/></svg><span>202 , 51</span></div>
  <div class="st-size"><svg class="ic"><use href="#i-size"/></svg><span>376 x 353</span></div>
  <div class="st-src"><svg class="ic"><use href="#i-upload"/></svg><span>Add to Source Control</span><i class="st-car"></i></div>
  <div class="st-repo"><svg class="ic"><use href="#i-git"/></svg><span>Select Repository</span><i class="st-car"></i></div>
  <div class="st-bell"><svg class="ic"><use href="#i-bell"/></svg><span class="badge">2</span></div>
  <i class="st-grip"></i>
</footer>

</body>
</html>
```

FILE: styles.css
```css
* { box-sizing: border-box; margin: 0; padding: 0; }
html, body { height: 100%; }
body {
  width: 1700px; height: 962px; overflow: hidden;
  display: flex; flex-direction: column;
  background: #5d6b99; color: #1e1e1e;
  font: 12px/16px Roboto, "Open Sans", sans-serif;
}
.defs { position: absolute; }
ul { list-style: none; }
i { font-style: normal; display: block; flex: none; }
svg.ic { width: 16px; height: 16px; flex: none; display: block; }

/* margin helpers for the toolbars */
.ml1 { margin-left: 1px; } .ml2 { margin-left: 2px; } .ml3 { margin-left: 3px; }
.ml4 { margin-left: 4px; } .ml5 { margin-left: 5px; } .ml6 { margin-left: 6px; }
.ml7 { margin-left: 7px; } .ml8 { margin-left: 8px; } .ml9 { margin-left: 9px; }
.ml11 { margin-left: 11px; } .ml12 { margin-left: 12px; } .ml15 { margin-left: 15px; }
.ml18 { margin-left: 18px; }
.push { margin-left: auto; }
.tail { margin-right: 9px; }

/* toolbar pieces */
.tb { width: 22px; height: 22px; flex: none; display: flex; align-items: center; justify-content: center; color: #333; }
.tb.blue { color: #1a5fa8; }
.tb.dark { color: #333; }
.tb.off { color: #a3a9b8; }
.car { width: 11px; height: 0; position: relative; }
.car::after {
  content: ""; position: absolute; left: 2px; top: -2px;
  border: 3.5px solid transparent; border-top: 4px solid #1e1e1e; border-bottom: 0;
}
.car.off::after { border-top-color: #9aa2b5; }
.more { width: 11px; height: 10px; position: relative; top: 6px; }
.more::before { content: ""; position: absolute; left: 2px; top: 0; width: 7px; height: 1px; background: #1e1e1e; }
.more::after { content: ""; position: absolute; left: 2px; top: 3px; border: 3.5px solid transparent; border-top: 4px solid #1e1e1e; border-bottom: 0; }
.sep { width: 1px; height: 24px; background: #a4aecb; }
.grip { width: 6px; height: 20px; background: radial-gradient(circle, #5d6b99 .8px, transparent 1px) 0 0 / 3px 3px; }
.tog {
  height: 24px; flex: none; display: flex; align-items: center; justify-content: center;
  background: #fef0c9; border: 1px solid #7a5a14;
}
.w23 { width: 23px; }
.w33 { width: 33px; }
.w54 { width: 54px; }
.w65 { width: 65px; }

/* title + menu */
.app-head { height: 66px; flex: none; background: #ccd5f0; border-top: 1px solid #1f3c86; }
.menu-row { height: 32px; display: flex; align-items: center; position: relative; }
.vs-logo { width: 45px; height: 32px; position: relative; flex: none; }
.vs-mark { position: absolute; left: 13px; top: 4px; width: 20px; height: 20px; }
.pre {
  position: absolute; left: 19px; top: 17px; width: 14px; height: 10px;
  border: 1px solid #8457c1; background: #ccd5f0; color: #8457c1;
  font: bold 6px/8px "Liberation Sans", sans-serif; text-align: center;
}
.menu { display: flex; gap: 19.3px; width: 708px; color: #1e1e1e; }
.quick-search {
  width: 220px; height: 23px; background: #fff; border: 1px solid #8a94ac; flex: none;
  display: flex; align-items: center; justify-content: space-between; padding: 0 5px; color: #5f6470;
}
.sol-name { width: 145px; height: 24px; margin-left: 18px; background: #dfe5f9; line-height: 24px; padding-left: 8px; color: #3c4a72; flex: none; }
.avatar {
  width: 21px; height: 21px; margin-left: 385px; border-radius: 50%;
  background: #0a870a; color: #d8f0d8; font-size: 11px; line-height: 21px; text-align: center; flex: none;
}
.win-btn { width: 12px; height: 12px; margin-left: 34px; flex: none; }
.win-btn.first { margin-left: 35px; }
.win-btn svg { display: block; }
.tool-row { height: 33px; padding-bottom: 5px; display: flex; align-items: center; }
.combo {
  height: 22px; background: #fff; border: 1px solid #8a94ac; flex: none;
  display: flex; align-items: center; justify-content: space-between; padding-left: 3px;
}
.combo-debug { width: 65px; }
.combo-cpu { width: 109px; }
.tool-text { width: 37px; flex: none; }
.preview {
  width: 71px; height: 23px; margin: 0 15px 0 19px; background: #5d6b99; color: #fff;
  font-weight: 700; line-height: 23px; text-align: center; flex: none;
}

/* main area */
.workspace { flex: 1; display: flex; padding: 7px 8px; min-height: 0; }
.panel { display: flex; flex-direction: column; background: #f8f9ff; }
.toolbox { width: 315px; }
.panel-head {
  height: 21px; flex: none; display: flex; align-items: center; padding-left: 4px;
  background: #40568d; color: #fff;
}
.panel-head span { flex: 1; }
.head-car { border: 4px solid transparent; border-top: 4px solid #8ea0cc; border-bottom: 0; margin-right: 6px; }
.pin { width: 12px; height: 12px; color: #a8b6d8; margin-right: 5px; }
.search-box {
  height: 23px; flex: none; display: flex; align-items: center; background: #fff;
  border: 1px solid #9aa6c4; padding-left: 4px; color: #6d6d6d;
}
.search-box span { flex: 1; padding-bottom: 2px; }
.search-drop { width: 12px; height: 100%; border-left: 1px solid #9aa6c4; position: relative; margin-left: 2px; }
.search-drop::after { content: ""; position: absolute; left: 2px; top: 8px; border: 3px solid transparent; border-top: 4px solid #1e1e1e; border-bottom: 0; }
.scroll-area { flex: 1; display: flex; min-height: 0; overflow: hidden; }

.vscroll { width: 17px; flex: none; background: #e8e8ec; position: relative; }
.vscroll b { position: absolute; left: 4px; width: 9px; background: #c2c3c9; }
.vscroll .up { position: absolute; left: 3px; top: 5px; border: 5.500px solid transparent; border-bottom: 5px solid #8e93a3; border-top: 0; }
.vscroll .down { position: absolute; left: 3px; bottom: 6px; border: 5.500px solid transparent; border-top: 5px solid #8e93a3; border-bottom: 0; }
.toolbox-scroll b { top: 124px; height: 348px; }
.tree-scroll b { top: 18px; height: 240px; }
.prop-scroll b { top: 230px; height: 73px; }

.tool-list { flex: 1; overflow: hidden; }
.tool-list li { height: 21px; display: flex; align-items: center; padding-left: 20px; }
.tool-list svg.ic { width: 15px; height: 15px; margin-right: 16px; }

/* center */
.center { width: 912px; margin-left: 8px; display: flex; flex-direction: column; }
.doc-tabs { height: 19px; flex: none; display: flex; align-items: flex-end; border-bottom: 1px solid #f5cc84; }
.doc-tab { width: 179px; height: 18px; background: #40568d; color: #fff; padding-left: 5px; line-height: 17px; }
.doc-tab.active { width: 161px; height: 19px; background: #f5cc84; color: #1e1e1e; display: flex; align-items: center; padding-left: 4px; }
.doc-tab.active span { width: 124px; }
.tab-pin { width: 11px; height: 11px; margin-left: 6px; }
.tab-x { width: 11px; height: 11px; margin-left: 8px; color: #5a4510; }
.doc-tabs .head-car { border-top-color: #fff; margin: 0 0 7px auto; }
.tab-gear { width: 11px; height: 11px; color: #e6eaf5; margin: 0 1px 4px 9px; }

.designer { flex: 1; display: flex; flex-direction: column; min-height: 0; overflow: hidden; background: #000; }
.ruler-top { height: 26px; flex: none; display: flex; background: #000; color: #c9c9c9; }
.ruler-corner { width: 26px; flex: none; writing-mode: vertical-rl; transform: rotate(180deg); line-height: 22px; font-size: 12px; text-align: left; padding: 4px 4px 0 0; }
.ruler-marks {
  flex: 1; display: flex; overflow: hidden;
  background:
    linear-gradient(90deg, #9a9a9a 1px, transparent 1px) 0 0 / 100px 100% repeat-x,
    linear-gradient(90deg, #9a9a9a 1px, transparent 1px) 0 100% / 25px 12px repeat-x,
    linear-gradient(90deg, #9a9a9a 1px, transparent 1px) 0 100% / 5px 6px repeat-x;
}
.ruler-marks span { width: 100px; flex: none; padding: 0 0 0 2px; font-size: 12px; line-height: 15px; }
.design-body { flex: 1; display: flex; min-height: 0; }
.ruler-left {
  width: 26px; flex: none; color: #c9c9c9; overflow: hidden;
  background:
    linear-gradient(#9a9a9a 1px, transparent 1px) 0 0 / 100% 100px repeat-y,
    linear-gradient(#9a9a9a 1px, transparent 1px) 100% 0 / 14px 25px repeat-y,
    linear-gradient(#9a9a9a 1px, transparent 1px) 100% 0 / 6px 5px repeat-y;
}
.ruler-left span {
  display: block; height: 100px; writing-mode: vertical-rl; transform: rotate(180deg);
  line-height: 22px; margin-right: 4px; font-size: 12px; text-align: left;
}
.surface {
  flex: 1; min-width: 0;
  background-color: #636363;
  background-image:
    linear-gradient(#8f8f8f 1px, transparent 1px),
    linear-gradient(90deg, #8f8f8f 1px, transparent 1px),
    linear-gradient(#727272 1px, transparent 1px),
    linear-gradient(90deg, #727272 1px, transparent 1px);
  background-size: 25px 25px, 25px 25px, 5px 5px, 5px 5px;
}
.form {
  width: 614px; height: 482px; position: relative; background: #fff;
  border-right: 1px solid #1a7ff0; border-bottom: 1px solid #1a7ff0;
  font-family: "Open Sans", Roboto, sans-serif;
}
.form-title { height: 48px; margin-right: -1px; background: #007bff; color: #fff; position: relative; }
.form-title span { position: absolute; left: 10px; top: 15px; font: 700 17px/20px Roboto, sans-serif; }
.form-min { position: absolute; left: 528px; top: 23px; width: 20px; height: 2px; background: #b6d8ff; }
.form-max {
  position: absolute; left: 558px; top: 14px; width: 20px; height: 21px;
  background:
    linear-gradient(#b6d8ff, #b6d8ff) 0 0 / 6px 1px no-repeat, linear-gradient(#b6d8ff, #b6d8ff) 100% 0 / 6px 1px no-repeat,
    linear-gradient(#b6d8ff, #b6d8ff) 0 100% / 6px 1px no-repeat, linear-gradient(#b6d8ff, #b6d8ff) 100% 100% / 6px 1px no-repeat,
    linear-gradient(#b6d8ff, #b6d8ff) 0 0 / 1px 6px no-repeat, linear-gradient(#b6d8ff, #b6d8ff) 100% 0 / 1px 6px no-repeat,
    linear-gradient(#b6d8ff, #b6d8ff) 0 100% / 1px 6px no-repeat, linear-gradient(#b6d8ff, #b6d8ff) 100% 100% / 1px 6px no-repeat;
}
.form-close { position: absolute; left: 588px; top: 14px; width: 20px; height: 20px; border: 1px solid #b6d8ff; border-radius: 2px; padding: 3px; }
.form-close svg { display: block; }

.btn1 {
  position: absolute; left: 44px; top: 90px; width: 108px; height: 65px; border-radius: 3px;
  background: #f8f9fa; color: #343a40; font-size: 12.500px; line-height: 67px; text-align: center;
}
.chk1 { position: absolute; left: 47px; top: 196px; display: flex; align-items: center; font-size: 12.500px; color: #343a40; }
.chk1 span { padding-top: 2px; }
.chk1 i { width: 15px; height: 15px; border: 2px solid #8a8a8a; border-radius: 2px; margin-right: 6px; }

.selection { position: absolute; left: 200px; top: 97px; width: 380px; height: 357px; border: 1px solid #ffa800; }
.wj-panel { position: absolute; inset: 1px; border: 1px solid #c8c8c8; }
.wj-panel-head {
  height: 29px; background: #007bff; color: #fff; border-radius: 0 0 4px 4px;
  display: flex; align-items: center; justify-content: space-between; padding: 2px 10px 0;
  font-size: 12px;
}
.wj-panel-head svg { width: 12px; height: 8px; margin: -6px 4px 0 0; }
.h { position: absolute; width: 8px; height: 8px; background: #ffa800; border-radius: 2px; }
.tl { left: -5px; top: -5px; } .tc { left: 186px; top: -5px; } .tr { right: -5px; top: -5px; }
.ml { left: -5px; top: 173px; } .mr { right: -5px; top: 173px; }
.bl { left: -5px; bottom: -4px; } .bc { left: 186px; bottom: -4px; } .br { right: -5px; bottom: -4px; }
.move-box { position: absolute; left: 8px; top: -6px; width: 15px; height: 15px; background: #fff; border: 1px solid #ffa800; }
.move-box svg { width: 13px; height: 13px; display: block; }
.tag-box { position: absolute; left: 361px; top: -7px; width: 11px; height: 11px; background: #fff; border: 1px solid #ffa800; }
.tag-box::after { content: ""; position: absolute; left: 3px; top: 1px; border: 3.500px solid transparent; border-left: 4px solid #ffa800; border-right: 0; }
.anc-up { position: absolute; left: 184px; top: -13px; border: 4.500px solid transparent; border-bottom: 5px solid #000; border-top: 0; }
.anc-left { position: absolute; left: -15px; top: 172px; border: 5px solid transparent; border-right: 5px solid #000; border-left: 0; }
.anc-right { position: absolute; right: -15px; top: 173px; width: 6px; height: 10px; }
.anc-down { position: absolute; left: 184px; bottom: -15px; width: 10px; height: 6px; }

.design-tools { height: 30px; flex: none; display: flex; align-items: center; background: #ccd5f0; }
.dt-text { flex: none; white-space: nowrap; letter-spacing: -.6px; }
.swatch { width: 16px; height: 18px; background: #ffa800; }
.dots { width: 12px; flex: none; display: flex; justify-content: center; }

/* right column */
.right-col { width: 442px; margin-left: 7px; display: flex; flex-direction: column; gap: 8px; }
.solution { height: 382px; background: #5d6b99; }
.se-tools { height: 28px; flex: none; display: flex; align-items: center; background: #ccd5f0; }
.se-tools .tog { height: 22px; }
.tree-area { background: #f8f9ff; }
.tree { flex: 1; overflow: hidden; }
.tree li { height: 19px; display: flex; align-items: center; white-space: nowrap; }
.tree svg.ic { margin-right: 5px; }
.tree .strong { font-weight: 700; }
.lv0 { padding-left: 14px; }
.lv1 { padding-left: 10px; }
.lv2 { padding-left: 28px; }
.lv3 { padding-left: 46px; }
.exp { width: 22px; height: 10px; position: relative; }
.exp::before { content: ""; position: absolute; left: 0; top: 0; border: 5px solid transparent; border-left: 6px solid #111; border-right: 0; }
.exp::after { content: ""; position: absolute; left: 1px; top: 2px; border: 3px solid transparent; border-left: 3.500px solid #f8f9ff; border-right: 0; }
.exp.open::before { display: none; }
.exp.open::after { border: 0; left: 0; top: 2px; width: 7px; height: 7px; background: linear-gradient(135deg, transparent 50%, #222 50%); }
.exp.none::before, .exp.none::after { display: none; }
.hscroll-strip { height: 5px; flex: none; background: #e8e8ec; }
.tool-tabs { height: 21px; flex: none; display: flex; gap: 2px; background: #5d6b99; }
.tool-tab { height: 20px; margin-top: 1px; padding: 0 4px; line-height: 19px; background: #40568d; color: #ccd5f0; width: 78px; white-space: nowrap; }
.tool-tab.active { width: 100px; background: #f8f9ff; color: #1e1e1e; }

.props { flex: 1; min-height: 0; }
.obj-select { height: 25px; flex: none; display: flex; align-items: center; padding: 0 0 2px 6px; }
.obj-select b { margin-right: 7px; }
.obj-select span { flex: 1; }
.prop-tools { height: 25px; padding-bottom: 2px; flex: none; display: flex; align-items: center; background: #ccd5f0; margin: 0 1px; }
.prop-tools .tog { height: 21px; }
.prop-area { padding-top: 2px; }
.prop-grid { flex: 1; overflow: hidden; background: #f0f0f5; }
.pr { height: 19px; display: flex; border-bottom: 1px solid #f0f0f5; position: relative; }
.pr > i { width: 15px; flex: none; position: relative; }
.plus::before {
  content: ""; position: absolute; left: 3px; top: 4px; width: 9px; height: 9px;
  border: 1px solid #111;
  background: linear-gradient(#111, #111) center / 5px 1px no-repeat, linear-gradient(#111, #111) center / 1px 5px no-repeat, #fff;
}
.pn { width: 174px; flex: none; padding-left: 4px; background: #f8f9ff; line-height: 18px; border-right: 1px solid #eeeef2; }
.pv { flex: 1; padding-left: 3px; background: #f8f9ff; line-height: 18px; display: flex; align-items: center; }
.pv.bold { font-weight: 700; }
.pr.sel .pn { background: #ececf0; }
svg.val { width: 20px; height: 16px; margin: 0 8px 0 -2px; flex: none; }
.prop-desc { height: 63px; flex: none; padding: 6px 6px 0; background: #f8f9ff; border-top: 1px solid #d8d8e0; }
.prop-desc p { margin-top: 2px; }

/* status bar */
.status { height: 24px; flex: none; display: flex; align-items: center; background: #40568d; color: #fff; position: relative; border-bottom: 1px solid #2f4478; }
.status svg.ic { margin-right: 8px; }
.st-left { width: 913px; padding-left: 5px; display: flex; align-items: center; }
.st-pos { width: 158px; display: flex; align-items: center; letter-spacing: -.4px; }
.st-pos svg.ic, .st-size svg.ic { margin-right: 3px; }
.st-size { width: 249px; display: flex; align-items: center; letter-spacing: -.3px; }
.st-src { width: 175px; display: flex; align-items: center; }
.st-src svg.ic { margin-right: 6px; }
.st-repo { width: 148px; display: flex; align-items: center; letter-spacing: -.25px; }
.st-repo svg.ic { margin-right: 7px; }
.st-car { border: 4px solid transparent; border-bottom: 4px solid #fff; border-top: 0; margin-left: 5px; }
.st-bell { width: 24px; position: relative; }
.badge {
  position: absolute; left: 7px; top: 4px; width: 11px; height: 11px; border-radius: 50%;
  background: #e51400; color: #fff; font-size: 10px; line-height: 11px; text-align: center;
}
.st-grip { position: absolute; right: 2px; bottom: 2px; width: 8px; height: 8px; background: radial-gradient(circle, #8b9ac4 .7px, transparent 1px) 0 0 / 2.500px 2.500px; }
```
